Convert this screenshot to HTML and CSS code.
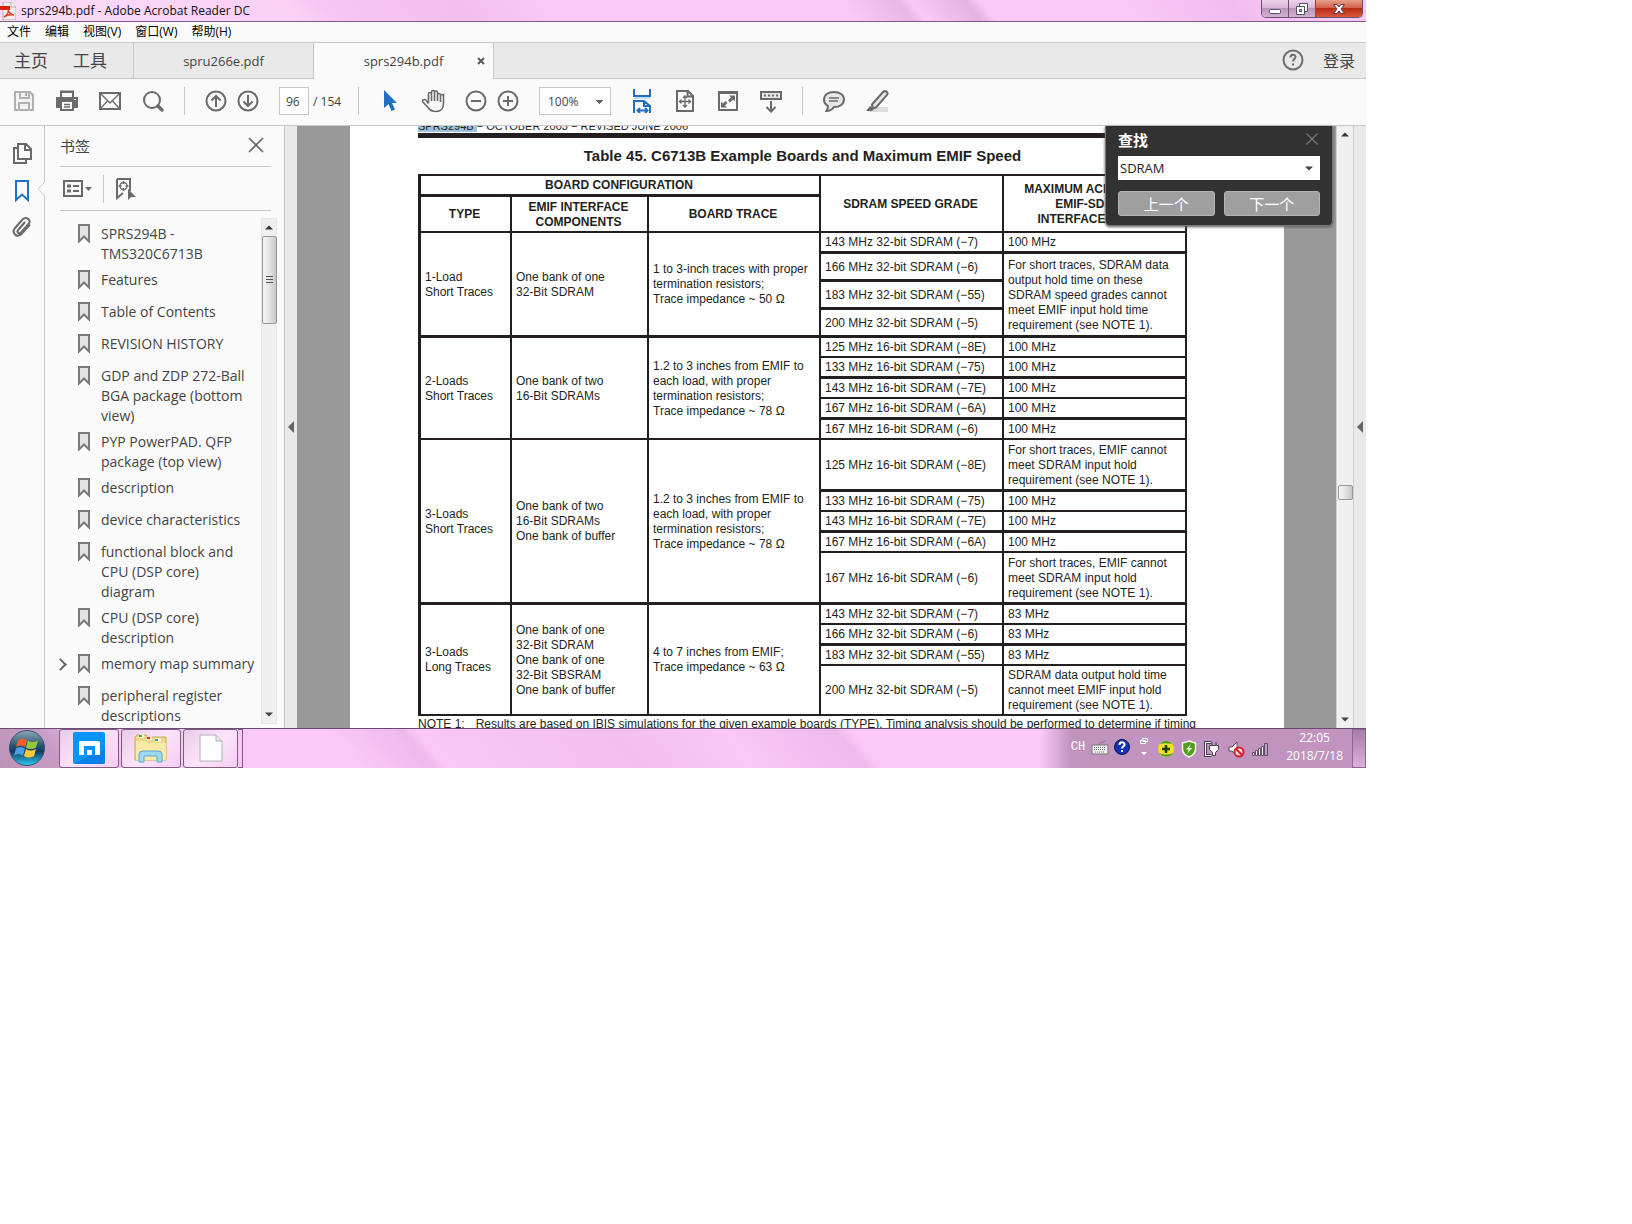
FILE: index.html
```html
<!DOCTYPE html>
<html lang="zh-CN">
<head>
    <meta charset="utf-8">
    <title>sprs294b.pdf - Adobe Acrobat Reader DC</title>
    <link rel="stylesheet" href="styles.css">
</head>
<body>
<!-- shared icons -->
<svg class="defs" width="0" height="0">
    <symbol id="mark" viewBox="0 0 12 19"><path d="M1 1h10v16.500l-5-5-5 5z" fill="#e3e3e3" stroke="#7a7a7a" stroke-width="2"/></symbol>
    <symbol id="up" viewBox="0 0 8 5"><path d="M0 4.500L4 .5l4 4z" fill="#333"/></symbol>
    <symbol id="down" viewBox="0 0 8 5"><path d="M0 .5l4 4 4-4z" fill="#444"/></symbol>
    <symbol id="left" viewBox="0 0 6 12"><path d="M6 0v12L0 6z" fill="#666"/></symbol>
</svg>
<div class="desktop">
    <header class="titlebar">
        <svg class="appicon" width="16" height="18" viewBox="0 0 16 18"><path d="M3 0h8l5 5v13H3z" fill="#f1eeee" stroke="#b9a9b2"/><path d="M11 0v5h5" fill="#fff" stroke="#b9a9b2"/><path d="M0 4h10v4H0z" fill="#d9200f"/><path d="M4 15c4-2 5-6 4-8 0 3 3 6 6 6-4-1-7 0-10 2z" fill="none" stroke="#e0402c" stroke-width="1.500"/></svg>
        <span class="caption">sprs294b.pdf - Adobe Acrobat Reader DC</span>
        <div class="winbtns">
            <button class="wb" aria-label="最小化"><svg width="14" height="12" viewBox="0 0 14 12"><rect x="1.500" y="6.500" width="11" height="4" rx="1" fill="#fff" stroke="#555067"/></svg></button>
            <button class="wb" aria-label="还原"><svg width="14" height="14" viewBox="0 0 14 14"><path d="M4.500 1.500h8v8h-8z" fill="#fff" stroke="#555067"/><path d="M1.500 4.500h8v8h-8z" fill="#fff" stroke="#555067"/><path d="M4.500 7.500h2v2h-2z" fill="#b49bb5" stroke="#555067"/></svg></button>
            <button class="wb close" aria-label="关闭"><svg width="14" height="12" viewBox="0 0 14 12"><path d="M1.500 1.500h3.500l2 2.500 2-2.500h3.500L9 6l3.500 4.500H9L7 8l-2 2.500H1.500L5 6z" fill="#fff" stroke="#5c3a42"/></svg></button>
        </div>
    </header>
    <nav class="menubar">
        <a href="#">文件</a><a href="#">编辑</a><a href="#">视图(V)</a><a href="#">窗口(W)</a><a href="#">帮助(H)</a>
    </nav>
    <nav class="tabs">
        <div class="home"><a href="#">主页</a><a href="#">工具</a></div>
        <div class="tab"><a href="#">spru266e.pdf</a></div>
        <div class="tab active"><a href="#">sprs294b.pdf</a>
            <button class="tabclose" aria-label="关闭标签"><svg width="8" height="8" viewBox="0 0 8 8"><path d="M1 1l6 6M7 1L1 7" stroke="#5a5a5a" stroke-width="2"/></svg></button>
        </div>
        <div class="account">
            <button aria-label="帮助"><svg width="22" height="22" viewBox="0 0 22 22"><circle cx="11" cy="11" r="9.500" fill="none" stroke="#6e6e6e" stroke-width="2"/><path d="M8.500 8.500c0-3.500 5-3.500 5-.5 0 2-2.500 2-2.500 4.500M11 14.500v2" fill="none" stroke="#6e6e6e" stroke-width="2"/></svg></button>
            <a href="#">登录</a>
        </div>
    </nav>
    <div class="toolbar">
        <button aria-label="保存"><svg class="ic" viewBox="0 0 24 24"><path d="M3 3h15l3 3v15H3z" fill="#f3f3f3" stroke="#b0b0b0" stroke-width="2"/><path d="M8 3v6h9V3M7 21v-7h10v7" fill="none" stroke="#b0b0b0" stroke-width="2"/><path d="M13 4h2v3h-2z" fill="#b0b0b0"/></svg></button>
        <button aria-label="打印"><svg class="ic" viewBox="0 0 24 24"><path d="M5 1.500h14V8h4v11h-4v3H5v-3H1V8h4z" fill="#6a6a6a"/><path d="M7 4h10v4H7zM7 13h10v7H7z" fill="#fafafa"/><path d="M9 15.500h6M9 18h6" stroke="#6a6a6a" stroke-width="1.300"/><path d="M19 10.500h2" stroke="#fafafa"/></svg></button>
        <button aria-label="邮件"><svg class="ic" viewBox="0 0 24 24"><path d="M2 4h20v16H2z" class="st"/><path d="M2 4l10 10L22 4M2 20l7.500-8M22 20l-7.500-8" class="thin"/></svg></button>
        <button aria-label="搜索"><svg class="ic" viewBox="0 0 24 24"><circle cx="11" cy="11" r="8" class="st"/><path d="M17 17l4 4" stroke="#6a6a6a" stroke-width="3.500" stroke-linecap="round"/></svg></button>
        <i class="sep"></i>
        <div class="pair">
            <button aria-label="上一页"><svg class="ic" viewBox="0 0 24 24"><circle cx="12" cy="12" r="9.500" class="st"/><path d="M12 18V7M7.500 11.500L12 7l4.500 4.500" class="st"/></svg></button>
            <button aria-label="下一页"><svg class="ic" viewBox="0 0 24 24"><circle cx="12" cy="12" r="9.500" class="st"/><path d="M12 6v11M7.500 12.500L12 17l4.500-4.500" class="st"/></svg></button>
        </div>
        <div class="pager"><input type="text" id="page" value="96"><label for="page">/ 154</label></div>
        <i class="sep"></i>
        <button aria-label="选择"><svg class="ic" viewBox="0 0 24 24"><path d="M6 1v18l4.500-4 3 7 3.500-1.500-3-6.500h5z" fill="#1f6fc5"/></svg></button>
        <button aria-label="手形"><svg class="ic" viewBox="0 0 24 24"><path d="M7.500 14V5a1.500 1.500 0 013 0V3a1.500 1.500 0 013 0v2-1.500a1.500 1.500 0 013 0V6a1.500 1.500 0 013 0l3-.5v9c0 5-3 8-7.500 8S8.500 21 6.500 18L1.500 12.500c0-2.500 3-2.500 4-.5l2 2.500M10.500 5v7M13.500 5v7M16.500 6v6M19.500 6v7" fill="none" stroke="#6a6a6a" stroke-width="1.600"/></svg></button>
        <div class="pair">
            <button aria-label="缩小"><svg class="ic" viewBox="0 0 24 24"><circle cx="12" cy="12" r="9.500" class="st"/><path d="M7 12h10" class="st"/></svg></button>
            <button aria-label="放大"><svg class="ic" viewBox="0 0 24 24"><circle cx="12" cy="12" r="9.500" class="st"/><path d="M7 12h10M12 7v10" class="st"/></svg></button>
        </div>
        <select class="zoom" aria-label="缩放"><option>100%</option></select>
        <button aria-label="适合宽度"><svg class="ic" viewBox="0 0 24 24"><path d="M4 0v7h16V0M4 24V12h10l6 5v7M14 12v5h6M8 21.500h9M10 19l-2.500 2.500L10 24M15 19l2.500 2.500L15 24" fill="none" stroke="#1f6fc5" stroke-width="2"/><path d="M4 9h16" stroke="#c6dcf2" stroke-width="2"/></svg></button>
        <button aria-label="整页"><svg class="ic" viewBox="0 0 24 24"><path d="M4 2h11l5 5v15H4zM14.500 2v5.500H20" class="st"/><path d="M12 7v11M6.500 12.500h11M10 9l2-2 2 2M10 16l2 2 2-2M8.500 10.500l-2 2 2 2M15.500 10.500l2 2-2 2" class="thin"/></svg></button>
        <button aria-label="全屏"><svg class="ic" viewBox="0 0 24 24"><path d="M3 3h18v18H3z" class="st"/><path d="M2 2h20v3H2z" fill="#6a6a6a"/><path d="M13 6.500h6v6l-2-2-3 3-2-2 3-3zM5 12.500l2 2 2.500-2.500 2 2L9 16.500l2 2H5z" fill="#6a6a6a"/></svg></button>
        <button aria-label="工具栏"><svg class="ic" viewBox="0 0 24 24"><path d="M2 3h20v7H2z" fill="#e6e6e6" stroke="#6a6a6a" stroke-width="2"/><path d="M5 6.500h14" stroke="#6a6a6a" stroke-width="2" stroke-dasharray="2 2"/><path d="M12 12v10M7.500 18l4.500 4.500 4.500-4.500" class="st"/></svg></button>
        <i class="sep"></i>
        <button aria-label="注释"><svg class="ic" viewBox="0 0 24 24"><path d="M12 3c6 0 10 3 10 7.500S18 18 12 18c-2 3-4.500 4-7.500 4 1-1.500 1.500-3 1.500-5-2.500-1.500-4-3.500-4-6C2 6 6 3 12 3z" fill="#e6e6e6" stroke="#6a6a6a" stroke-width="2"/><path d="M7 9h10M7 12h9" class="thin"/></svg></button>
        <button aria-label="荧光笔"><svg class="ic" viewBox="0 0 24 24"><path d="M8 18h15v5H3z" fill="#ddd"/><path d="M7 15.500L18 3c2-2 6 0 4 3L11 18.500l-3.500.5z" fill="#e6e6e6" stroke="#6a6a6a" stroke-width="2"/><path d="M1 22l4-5 4 3-2 2z" fill="#6a6a6a"/></svg></button>
    </div>
    <main class="work">
        <div class="rail">
            <button aria-label="页面"><svg width="20" height="24" viewBox="0 0 20 24"><path d="M6 2h8l5 5v10H6zM13 2v6h6M6 6H2v15h12v-4" class="st"/></svg></button>
            <button aria-label="书签"><svg width="16" height="24" viewBox="0 0 16 24"><path d="M2 2h12v19l-6-5.500L2 21z" fill="none" stroke="#1f6fc5" stroke-width="2"/></svg></button>
            <button aria-label="附件"><svg width="22" height="24" viewBox="0 0 22 24"><path d="M14 6l-7 8c-1.500 2.500 1 4.500 3 2.500l8-9c2-3-2-7.500-6-4.500l-8 9c-3.500 4.500 1 10 6 6.500l9-10" class="st"/></svg></button>
            <svg class="notch" width="8" height="14" viewBox="0 0 8 14"><path d="M8 0L1 7l7 7" fill="#fafafa" stroke="#c8c8c8"/></svg>
        </div>
        <aside class="panel">
            <div class="panelhead"><h2>书签</h2>
                <button aria-label="关闭"><svg width="16" height="16" viewBox="0 0 16 16"><path d="M1 1l14 14M15 1L1 15" stroke="#666" stroke-width="1.600"/></svg></button>
            </div>
            <div class="paneltools">
                <button aria-label="选项"><svg width="30" height="20" viewBox="0 0 30 20"><path d="M2 2h18v15H2z" class="st"/><path d="M5 5.500h4v3H5zM5 10.500h4v3H5zM11 6h6v2h-6zM11 11h6v2h-6zM23 8h7l-3.500 4z" fill="#6a6a6a"/></svg></button>
                <i class="sep"></i>
                <button aria-label="新建书签"><svg width="22" height="24" viewBox="0 0 22 24"><path d="M2 2h13v12M2 2v19l6-5" class="st"/><circle cx="8.500" cy="9" r="3.500" class="thin"/><path d="M8.500 4v3M8.500 11v3M3.500 9h3M10.500 9h3" class="thin"/><path d="M13 12v11l3-3h5z" fill="#6a6a6a"/></svg></button>
            </div>
            <div class="listwrap">
                <ul class="marks">
                    <li><svg><use href="#mark"/></svg><a href="#">SPRS294B -<br>TMS320C6713B</a></li>
                    <li><svg><use href="#mark"/></svg><a href="#">Features</a></li>
                    <li><svg><use href="#mark"/></svg><a href="#">Table of Contents</a></li>
                    <li><svg><use href="#mark"/></svg><a href="#">REVISION HISTORY</a></li>
                    <li><svg><use href="#mark"/></svg><a href="#">GDP and ZDP 272-Ball<br>BGA package (bottom<br>view)</a></li>
                    <li><svg><use href="#mark"/></svg><a href="#">PYP PowerPAD. QFP<br>package (top view)</a></li>
                    <li><svg><use href="#mark"/></svg><a href="#">description</a></li>
                    <li><svg><use href="#mark"/></svg><a href="#">device characteristics</a></li>
                    <li><svg><use href="#mark"/></svg><a href="#">functional block and<br>CPU (DSP core)<br>diagram</a></li>
                    <li><svg><use href="#mark"/></svg><a href="#">CPU (DSP core)<br>description</a></li>
                    <li class="parent"><svg><use href="#mark"/></svg><a href="#">memory map summary</a></li>
                    <li><svg><use href="#mark"/></svg><a href="#">peripheral register<br>descriptions</a></li>
                </ul>
                <div class="scroll">
                    <svg class="arr"><use href="#up"/></svg>
                    <div class="thumb long"></div>
                    <svg class="arr last"><use href="#down"/></svg>
                </div>
            </div>
        </aside>
        <div class="strip"><svg width="6" height="12"><use href="#left"/></svg></div>
        <section class="doc">
            <article class="sheet">
                <div class="content">
                    <p class="running"><mark>SPRS294B </mark>− OCTOBER 2003 − REVISED JUNE 2006</p>
                    <h1>Table 45. C6713B Example Boards and Maximum EMIF Speed</h1>
                    <table>
                        <colgroup><col class="c1"><col class="c2"><col class="c3"><col class="c4"><col class="c4"></colgroup>
                        <thead>
                            <tr><th colspan="3" class="thick">BOARD CONFIGURATION</th><th rowspan="2">SDRAM SPEED GRADE</th><th rowspan="2">MAXIMUM ACHIEVABLE<br>EMIF-SDRAM<br>INTERFACE SPEED</th></tr>
                            <tr class="sub"><th>TYPE</th><th>EMIF INTERFACE<br>COMPONENTS</th><th>BOARD TRACE</th></tr>
                        </thead>
                        <tbody>
                            <tr><td rowspan="4" class="thick">1-Load<br>Short Traces</td><td rowspan="4" class="thick">One bank of one<br>32-Bit SDRAM</td><td rowspan="4" class="thick">1 to 3-inch traces with proper<br>termination resistors;<br>Trace impedance ~ 50 Ω</td><td class="thick">143 MHz 32-bit SDRAM (−7)</td><td class="thick">100 MHz</td></tr>
                            <tr class="mid"><td class="thick">166 MHz 32-bit SDRAM (−6)</td><td rowspan="3" class="thick">For short traces, SDRAM data<br>output hold time on these<br>SDRAM speed grades cannot<br>meet EMIF input hold time<br>requirement (see NOTE 1).</td></tr>
                            <tr class="mid"><td class="thick">183 MHz 32-bit SDRAM (−55)</td></tr>
                            <tr class="mid"><td class="thick">200 MHz 32-bit SDRAM (−5)</td></tr>
                        </tbody>
                        <tbody>
                            <tr><td rowspan="5">2-Loads<br>Short Traces</td><td rowspan="5">One bank of two<br>16-Bit SDRAMs</td><td rowspan="5">1.2 to 3 inches from EMIF to<br>each load, with proper<br>termination resistors;<br>Trace impedance ~ 78 Ω</td><td>125 MHz 16-bit SDRAM (−8E)</td><td>100 MHz</td></tr>
                            <tr><td class="thick">133 MHz 16-bit SDRAM (−75)</td><td class="thick">100 MHz</td></tr>
                            <tr><td>143 MHz 16-bit SDRAM (−7E)</td><td>100 MHz</td></tr>
                            <tr><td class="thick">167 MHz 16-bit SDRAM (−6A)</td><td class="thick">100 MHz</td></tr>
                            <tr><td>167 MHz 16-bit SDRAM (−6)</td><td>100 MHz</td></tr>
                        </tbody>
                        <tbody>
                            <tr class="tall"><td rowspan="5" class="thick">3-Loads<br>Short Traces</td><td rowspan="5" class="thick">One bank of two<br>16-Bit SDRAMs<br>One bank of buffer</td><td rowspan="5" class="thick">1.2 to 3 inches from EMIF to<br>each load, with proper<br>termination resistors;<br>Trace impedance ~ 78 Ω</td><td class="thick">125 MHz 16-bit SDRAM (−8E)</td><td class="thick">For short traces, EMIF cannot<br>meet SDRAM input hold<br>requirement (see NOTE 1).</td></tr>
                            <tr><td>133 MHz 16-bit SDRAM (−75)</td><td>100 MHz</td></tr>
                            <tr><td class="thick">143 MHz 16-bit SDRAM (−7E)</td><td class="thick">100 MHz</td></tr>
                            <tr><td>167 MHz 16-bit SDRAM (−6A)</td><td>100 MHz</td></tr>
                            <tr class="tall"><td class="thick">167 MHz 16-bit SDRAM (−6)</td><td class="thick">For short traces, EMIF cannot<br>meet SDRAM input hold<br>requirement (see NOTE 1).</td></tr>
                        </tbody>
                        <tbody>
                            <tr><td rowspan="4">3-Loads<br>Long Traces</td><td rowspan="4">One bank of one<br>32-Bit SDRAM<br>One bank of one<br>32-Bit SBSRAM<br>One bank of buffer</td><td rowspan="4">4 to 7 inches from EMIF;<br>Trace impedance ~ 63 Ω</td><td>143 MHz 32-bit SDRAM (−7)</td><td>83 MHz</td></tr>
                            <tr><td class="thick">166 MHz 32-bit SDRAM (−6)</td><td class="thick">83 MHz</td></tr>
                            <tr><td>183 MHz 32-bit SDRAM (−55)</td><td>83 MHz</td></tr>
                            <tr class="end"><td>200 MHz 32-bit SDRAM (−5)</td><td>SDRAM data output hold time<br>cannot meet EMIF input hold<br>requirement (see NOTE 1).</td></tr>
                        </tbody>
                    </table>
                    <p class="note"><span>NOTE 1:</span><span>Results are based on IBIS simulations for the given example boards (TYPE). Timing analysis should be performed to determine if timing</span></p>
                </div>
            </article>
            <form class="find">
                <div class="findhead"><label for="find">查找</label>
                    <button type="button" aria-label="关闭"><svg width="12" height="12" viewBox="0 0 12 12"><path d="M.5.5l11 11M11.500.5l-11 11" stroke="#777" stroke-width="1.300"/></svg></button>
                </div>
                <div class="findbox"><input type="text" id="find" value="SDRAM">
                    <button type="button" aria-label="选项"><svg width="8" height="5"><use href="#down"/></svg></button>
                </div>
                <div class="findbtns"><button type="button">上一个</button><button type="button">下一个</button></div>
            </form>
        </section>
        <div class="scroll docscroll">
            <svg class="arr"><use href="#up"/></svg>
            <div class="thumb"></div>
            <svg class="arr last"><use href="#down"/></svg>
        </div>
        <div class="strip"><svg width="6" height="12"><use href="#left"/></svg></div>
    </main>
    <footer class="taskbar">
        <button class="start" aria-label="开始"><svg width="38" height="38" viewBox="0 0 38 38">
            <defs>
                <linearGradient id="orb" x2="0" y2="1"><stop offset="0" stop-color="#8fa9b8"/><stop offset=".45" stop-color="#27506f"/><stop offset=".6" stop-color="#0d3a60"/><stop offset="1" stop-color="#2fd0f5"/></linearGradient>
            </defs>
            <circle cx="19" cy="19" r="17.500" fill="url(#orb)" stroke="#35506b"/>
            <path d="M10 11c3-2 6-2 9 0l-2 7c-3-2-6-2-9 0z" fill="#e9622b"/><path d="M20 11.500c3 2 6 2 10 0l-2 7c-4 2-7 2-10 0z" fill="#93c83e"/><path d="M8 19.500c3-2 6-2 9 0l-2 7c-3-2-6-2-9 0z" fill="#4b9fe0"/><path d="M18 20c3 2 6 2 10 0l-2 7c-4 2-7 2-10 0z" fill="#fbc935"/>
        </svg></button>
        <button class="task" aria-label="傲游"><svg width="32" height="32" viewBox="0 0 32 32"><rect width="32" height="32" rx="2" fill="#0a94f5"/><path d="M2 31l30-14v13a2 2 0 01-2 2H2z" fill="#0a80e8"/><path d="M6 23V10q0-1 1-1h18q2 0 2 2v12h-5v-9H11v9zM14 18h5v5h-5z" fill="#fff"/></svg></button>
        <button class="task" aria-label="资源管理器"><svg width="34" height="32" viewBox="0 0 34 32"><path d="M1 5l2-2h9l2 2h18v23H1z" fill="#f0d889" stroke="#c9a956"/><path d="M5 4h5M13 6h5M21 8h6" stroke="#fff" stroke-width="3"/><path d="M5 4h3" stroke="#36b52e" stroke-width="2"/><path d="M13 6h3" stroke="#d33" stroke-width="2"/><path d="M21 8h3" stroke="#39d" stroke-width="2"/><path d="M2 9h10l2 2h18v17H2z" fill="#f8e9a6"/><path d="M5 30V22q0-3 4-3h15q4 0 4 3v8h-5v-6H10v6z" fill="#9fd8f0" stroke="#5aa8cc"/></svg></button>
        <button class="task" aria-label="文档"><svg width="24" height="28" viewBox="0 0 24 28"><path d="M1 1h16l6 6v20H1z" fill="#fdfdfd" stroke="#b5b0b5"/><path d="M17 1v6h6" fill="#e4e4e4" stroke="#b5b0b5"/></svg></button>
        <i class="stack"></i>
        <div class="tray">
            <span class="lang">CH</span>
            <svg width="18" height="18" viewBox="0 0 18 18"><path d="M1 7h16v9H1z" fill="#eee" stroke="#777"/><path d="M3 9.500h12M3 11.500h12M4 14h10" stroke="#777" stroke-dasharray="1 1"/><path d="M8 7c0-4 4-1 7-5" fill="none" stroke="#777"/></svg>
            <svg width="18" height="18" viewBox="0 0 18 18"><circle cx="9" cy="9" r="7.500" fill="#1233b5" stroke="#0c1440"/><path d="M6.500 7c0-3.500 5-3.500 5-.5 0 2-2.500 2-2.500 4M9 12v2" fill="none" stroke="#fff" stroke-width="2"/></svg>
            <svg class="high" width="10" height="20" viewBox="0 0 10 20"><path d="M3.500 1.500h5v3h-5zM1.500 3.500h5v3h-5z" fill="#b58fb8" stroke="#fff"/><path d="M2 15h6l-3 3z" fill="#fff"/></svg>
            <div class="icons">
                <svg width="18" height="18" viewBox="0 0 18 18"><circle cx="9" cy="9" r="8" fill="#f2e21b"/><path d="M2 13c4 5 11 5 14 0-4 2-10 2-14 0M3 4c3-4 9-4 12 0-4-1-8-1-12 0" fill="#3f9e28"/><path d="M9 5v8M5 9h8" stroke="#123e12" stroke-width="2.500"/></svg>
                <svg width="16" height="18" viewBox="0 0 16 18"><path d="M8 1l6.500 2v6c0 4-3 6.500-6.500 8-3.500-1.500-6.500-4-6.500-8V3z" fill="#4e9d1d" stroke="#f5f5e8" stroke-width="1.500"/><path d="M10 4L5 9.500h3L6 14l5-6H8z" fill="#fff"/></svg>
                <svg width="18" height="18" viewBox="0 0 18 18"><path d="M8.500 2.500h-6v13h6" fill="none" stroke="#4b4050" stroke-width="3"/><path d="M8.500 2.500h-6v13h6" fill="none" stroke="#fff"/><path d="M9 5V2M13 5V2M6.500 5.500h9v4l-3 3v3h-3v-3l-3-3z" fill="#fff" stroke="#4b4050"/></svg>
                <svg width="18" height="18" viewBox="0 0 18 18"><path d="M2 7h3l5-5v14l-5-5H2z" fill="#fff" stroke="#5b4a60"/><circle cx="12" cy="12" r="4.500" fill="#f6dadd" stroke="#d81f26" stroke-width="2"/><path d="M9 9l6 6" stroke="#d81f26" stroke-width="2"/></svg>
                <svg width="18" height="18" viewBox="0 0 18 18"><path d="M1.500 12.500h2v3h-2zM4.500 10.500h2v5h-2zM7.500 8.500h2v7h-2zM10.500 6.500h2v9h-2z" fill="#fff" stroke="#665068"/><path d="M13.500 3.500h3v12h-3z" fill="#b9a0bb" stroke="#665068"/></svg>
            </div>
            <time>22:05<br>2018/7/18</time>
            <button class="peek" aria-label="显示桌面"></button>
        </div>
    </footer>
</div>
</body>
</html>
```
FILE: styles.css
```css
body
{
    margin: 0;
    background: #fff;
    font-family: "Open Sans", "Noto Sans CJK SC", sans-serif;
    font-size: 14px;
    color: #444;
}
button
{
    display: flex;
    align-items: center;
    justify-content: center;
    padding: 0;
    border: 0;
    background: none;
    font: inherit;
    color: inherit;
}
a
{
    color: inherit;
    text-decoration: none;
}
input, select
{
    box-sizing: border-box;
    font: inherit;
}
h1, h2, p, ul
{
    margin: 0;
    padding: 0;
}
.defs
{
    position: absolute;
}
/* the whole screen keeps a 1366:768 shape */
.desktop
{
    display: flex;
    flex-direction: column;
    max-width: 1366px;
    aspect-ratio: 683 / 384;
    overflow: hidden;
    background: #fafafa;
}
.st
{
    fill: none;
    stroke: #6a6a6a;
    stroke-width: 2;
}
.thin
{
    fill: none;
    stroke: #6a6a6a;
    stroke-width: 1.3;
}
.sep
{
    width: 1px;
    height: 28px;
    background: #c8c8c8;
}

/* title bar */
.titlebar
{
    display: flex;
    align-items: center;
    height: 21px;
    flex: none;
    border-bottom: 1px solid #7d5a86;
    background: linear-gradient(50deg, #fadcf8 0, #fad0f7 22%, #f8c6f4 24%, #f3bfee 34%, #f9c8f6 40%, #f9c8f6 62%, #e9b7e6 66%, #f9c8f6 67%, #e6b3e3 71%, #f9c8f6 72%, #f9c8f6 82%, #f3bcef 90%, #f9c8f6 96%);
}
.caption
{
    margin-left: 5px;
    font-size: 12px;
    color: #111;
}
.winbtns
{
    display: flex;
    align-self: flex-start;
    margin: 0 3px 0 auto;
    border: 1px solid #6b4f70;
    border-top: 0;
    border-radius: 0 0 5px 5px;
    overflow: hidden;
}
.wb
{
    width: 27px;
    height: 17px;
    background: linear-gradient(#ecd3ea, #d9b6d8 45%, #b995bb 50%, #d3b1d4);
    border-right: 1px solid #6b4f70;
}
.close
{
    width: 46px;
    border: 0;
    background: linear-gradient(#e5a08e, #d4604a 45%, #b92c14 50%, #d8583c);
}

/* menu and tabs */
.menubar
{
    display: flex;
    align-items: center;
    gap: 14px;
    box-sizing: border-box;
    height: 20px;
    flex: none;
    padding: 0 0 2px 7px;
    font-size: 12px;
    color: #000;
}
.tabs
{
    display: flex;
    box-sizing: border-box;
    height: 37px;
    flex: none;
    background: #e9e9e9;
    border-top: 1px solid #c8c8c8;
    border-bottom: 1px solid #c8c8c8;
}
.home
{
    display: flex;
    align-items: center;
    gap: 25px;
    padding: 0 26px 2px 14px;
    font-size: 17px;
}
.tab
{
    position: relative;
    display: flex;
    align-items: center;
    justify-content: center;
    width: 179px;
    border-left: 1px solid #c8c8c8;
    font-size: 13px;
}
.active
{
    margin-bottom: -1px;
    background: #fafafa;
    border-right: 1px solid #c8c8c8;
}
.tabclose
{
    position: absolute;
    right: 8px;
}
.account
{
    display: flex;
    align-items: center;
    gap: 19px;
    margin-left: auto;
    padding: 0 11px 2px 0;
    font-size: 16px;
}
.toolbar
{
    display: flex;
    align-items: center;
    gap: 19px;
    height: 44px;
    flex: none;
    padding: 0 0 2px 12px;
    border-bottom: 1px solid #c8c8c8;
}
.ic
{
    display: block;
    width: 24px;
    height: 24px;
}
.pair
{
    display: flex;
    gap: 8px;
}
.pager
{
    display: flex;
    align-items: center;
    gap: 4px;
    width: 60px;
    font-size: 12px;
    white-space: nowrap;
}
.pager input
{
    width: 30px;
    height: 28px;
    padding: 0 0 0 6px;
    border: 1px solid #c8c8c8;
    color: #444;
}
.zoom
{
    appearance: none;
    width: 72px;
    height: 28px;
    padding: 0 8px;
    border: 1px solid #c8c8c8;
    border-radius: 0;
    font-size: 12px;
    color: #444;
    background: linear-gradient(to bottom right, #666 50%, transparent 50%) 60px 12px / 4px 4px no-repeat, linear-gradient(to bottom left, #666 50%, transparent 50%) 56px 12px / 4px 4px no-repeat, #fff;
}

/* left side */
.work
{
    display: flex;
    flex: 1;
    min-height: 0;
}
.rail
{
    position: relative;
    display: flex;
    flex-direction: column;
    align-items: center;
    gap: 13px;
    width: 44px;
    padding-top: 16px;
    border-right: 1px solid #c8c8c8;
}
.notch
{
    position: absolute;
    right: -1px;
    top: 56px;
}
.panel
{
    display: flex;
    flex-direction: column;
    width: 239px;
    flex: none;
    border-right: 1px solid #c8c8c8;
}
.panelhead, .paneltools
{
    display: flex;
    align-items: center;
    margin: 0 13px 0 15px;
    border-bottom: 1px solid #c8c8c8;
}
.panelhead
{
    box-sizing: border-box;
    justify-content: space-between;
    height: 41px;
    padding: 0 7px 2px 0;
}
.panelhead h2
{
    font-size: 15px;
    font-weight: normal;
}
.paneltools
{
    gap: 11px;
    height: 43px;
    padding-left: 2px;
}
.listwrap
{
    display: flex;
    flex: 1;
    min-height: 0;
    padding: 7px 7px 4px 0;
}
.marks
{
    flex: 1;
    padding: 6px 0 0 33px;
    list-style: none;
    overflow: hidden;
}
.marks li
{
    display: flex;
    gap: 11px;
    box-sizing: border-box;
    min-height: 32px;
    padding-bottom: 6px;
    line-height: 20px;
    white-space: nowrap;
}
.marks svg
{
    width: 12px;
    height: 19px;
}
.parent
{
    position: relative;
}
.parent::before
{
    content: "";
    position: absolute;
    left: -22px;
    top: 6px;
    width: 7px;
    height: 7px;
    border: solid #666;
    border-width: 2px 2px 0 0;
    transform: rotate(45deg);
}
.scroll
{
    display: flex;
    flex-direction: column;
    align-items: center;
    box-sizing: border-box;
    width: 16px;
    flex: none;
    background: #f0f0f0;
    border: 1px solid #e6e6e6;
}
.arr
{
    width: 8px;
    height: 5px;
    flex: none;
    margin: 6px 0;
}
.last
{
    margin-top: auto;
}
.thumb
{
    display: flex;
    box-sizing: border-box;
    width: 15px;
    height: 15px;
    flex: none;
    border: 1px solid #979797;
    border-radius: 2px;
    background: linear-gradient(to right, #f6f6f6, #e4e4e6 50%, #c6c6ca);
}
.long
{
    height: 88px;
    align-items: center;
    justify-content: center;
}
.long::before
{
    content: "";
    width: 7px;
    height: 8px;
    background: repeating-linear-gradient(#555 0 1px, transparent 1px 3px);
}
.strip
{
    display: flex;
    align-items: center;
    justify-content: center;
    width: 12px;
    flex: none;
    background: #e9e9e9;
}

/* document */
.doc
{
    position: relative;
    display: flex;
    flex: 1;
    min-width: 0;
    padding: 0 52px 0 53px;
    background: #999;
}
.sheet
{
    flex: 1;
    min-width: 0;
    overflow: hidden;
    background: #fff;
    font-family: "Liberation Sans", Arial, sans-serif;
    font-size: 12px;
    line-height: 15px;
    color: #231f20;
}
.content
{
    width: 769px;
    margin-left: 68px;
}
.running
{
    height: 12px;
    margin-top: -7px;
    padding-bottom: 2px;
    border-bottom: 5px solid #231f20;
    font-size: 11px;
    line-height: 14px;
}
.running mark
{
    background: #9cc3dd;
    color: inherit;
}
.content h1
{
    padding: 8px 0;
    font-size: 15px;
    line-height: 20px;
    text-align: center;
}
table
{
    table-layout: fixed;
    width: 769px;
    border-collapse: separate;
    border-spacing: 0;
    border-top: 2px solid #231f20;
    border-left: 3px solid #231f20;
}
.c1
{
    width: 91px;
}
.c2
{
    width: 137px;
}
.c3
{
    width: 172px;
}
.c4
{
    width: 183px;
}
th, td
{
    height: 17px;
    padding: 1px 0 0 4px;
    border-right: 2px solid #231f20;
    border-bottom: 2px solid #231f20;
    text-align: left;
    white-space: nowrap;
}
th
{
    padding: 1px 2px 0 0;
    text-align: center;
}
.sub th
{
    height: 33px;
}
.mid td
{
    height: 24px;
}
.tall td
{
    height: 48px;
}
.end td
{
    height: 47px;
}
.thick
{
    border-bottom-width: 3px;
}
.note
{
    display: flex;
    gap: 11px;
    padding-top: 1px;
    white-space: nowrap;
}

/* find box floating over the page */
.find
{
    position: absolute;
    top: 0;
    right: 3px;
    box-sizing: border-box;
    width: 228px;
    padding: 2px 12px 9px;
    border: 1px solid #777;
    border-top: 0;
    border-radius: 0 0 5px 5px;
    background: #323232;
    box-shadow: 0 1px 3px #555;
    color: #fff;
}
.findhead
{
    display: flex;
    align-items: center;
    justify-content: space-between;
    height: 22px;
    margin-bottom: 6px;
    padding-right: 2px;
    font-weight: bold;
    font-size: 15px;
}
.findbox
{
    display: flex;
    background: #fff;
}
.findbox input
{
    flex: 1;
    min-width: 0;
    height: 24px;
    padding: 0 2px;
    border: 0;
    font-size: 13px;
    color: #222;
}
.findbox button
{
    width: 22px;
}
.findbtns
{
    display: flex;
    gap: 9px;
    margin-top: 11px;
}
.findbtns button
{
    flex: 1;
    height: 25px;
    border: 1px solid #b4b4b4;
    border-radius: 3px;
    background: #9f9f9f;
    font-size: 15px;
}
.docscroll
{
    width: 18px;
    border-width: 0 1px;
    border-color: #fafafa #d0d0d0;
}
.docscroll .thumb
{
    margin-top: 342px;
}

/* task bar */
.taskbar
{
    display: flex;
    height: 39px;
    flex: none;
    border-top: 1px solid #6b4a70;
    background: linear-gradient(50deg, #bd93ba 0, #c79cc4 5%, #f9c8f6 10%, #f9c8f6 26%, #f0b9ec 31%, #f9c8f6 32%, #f3bfee 46%, #f9c8f6 54%, #f0b9ec 62%, #f9c8f6 63%);
}
.start
{
    width: 54px;
    margin-right: 5px;
    padding-bottom: 2px;
}
.task
{
    width: 60px;
    margin-right: 2px;
    padding-bottom: 2px;
    border: 1px solid #7c5c80;
    border-radius: 3px;
    background: linear-gradient(135deg, #e9cbe8, #fbe4fa 50%, #f6cdf3);
}
.task:nth-of-type(4)
{
    width: 55px;
    margin: 0;
}
.stack
{
    width: 4px;
    border: solid #7c5c80;
    border-width: 1px 1px 1px 0;
}
.tray
{
    display: flex;
    align-items: center;
    gap: 4px;
    margin-left: auto;
    padding-left: 30px;
    background: linear-gradient(to right, transparent, #c094bf 30px);
    color: #fff;
}
.lang, .tray > svg, .icons, .tray time
{
    padding-bottom: 3px;
}
.lang
{
    margin-right: 2px;
    font: 12px "Liberation Mono", monospace;
}
.high
{
    margin: 0 4px;
}
.icons
{
    display: flex;
    gap: 6px;
    margin-right: 13px;
    padding-top: 4px;
}
.tray time
{
    font-size: 12px;
    line-height: 18px;
    text-align: center;
}
.peek
{
    align-self: stretch;
    width: 14px;
    margin-left: 5px;
    border: 1px solid #8a6790;
    background: linear-gradient(#a87ca9, #dcb0dc);
}
```
